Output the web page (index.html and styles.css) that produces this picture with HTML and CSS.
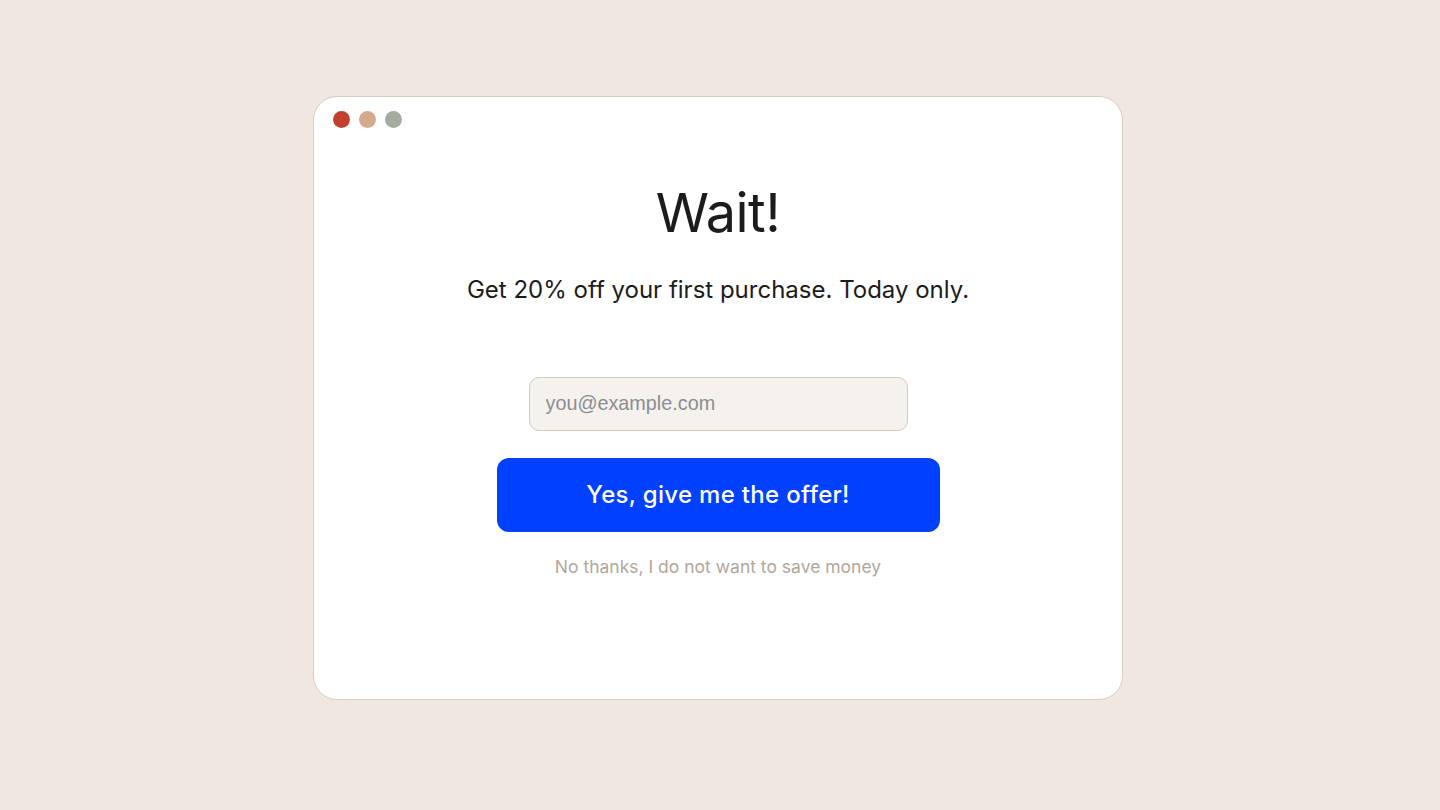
FILE: index.html
```html
<!DOCTYPE html>
<html>
<head>
    <title>Wait!</title>
    <link rel="stylesheet" href="styles.css">
</head>
<body>
    <div class="window">
        <div class="dots">
            <span class="dot red"></span>
            <span class="dot tan"></span>
            <span class="dot sage"></span>
        </div>
        <div class="offer">
            <h1>Wait!</h1>
            <p class="lead">Get 20% off your first purchase. Today only.</p>
            <input class="email" type="email" placeholder="you@example.com">
            <button class="cta">Yes, give me the offer!</button>
            <a class="decline" href="#">No thanks, I do not want to save money</a>
        </div>
    </div>
</body>
</html>
```

FILE: styles.css
```css
body {
    margin: 0;
    padding: 96px 0 0 313px;
    height: 810px;
    box-sizing: border-box;
    background-color: #f0e7e0;
    font-family: Inter, "Noto Sans", sans-serif;
}
.window {
    width: 810px;
    height: 604px;
    box-sizing: border-box;
    background-color: #ffffff;
    border: 1px solid #d9ccc0;
    border-radius: 24px;
    padding: 14px 19px;
}
.dots {
    display: flex;
    gap: 9px;
}
.dot {
    width: 17px;
    height: 17px;
    border-radius: 50%;
}
.red { background-color: #c2402f; }
.tan { background-color: #d4aa8b; }
.sage { background-color: #a4ac9f; }
.offer {
    display: flex;
    flex-direction: column;
    align-items: center;
}
h1 {
    margin: 53px 0 0;
    font-size: 54px;
    font-weight: 400;
    letter-spacing: -0.5px;
    color: #1c1c1c;
    line-height: 1.2;
}
.lead {
    margin: 29px 0 0;
    font-size: 24px;
    color: #1c1c1c;
}
.email {
    margin-top: 73px;
    width: 379px;
    height: 54px;
    box-sizing: border-box;
    padding: 0 16px;
    background-color: #f5f1ec;
    border: 1px solid #d6cabe;
    border-radius: 10px;
    font-family: "Liberation Sans", Arial, sans-serif;
    font-size: 19.8px;
    color: #333;
    outline: none;
}
.email::placeholder {
    color: #8b8d93;
}
.cta {
    margin-top: 27px;
    width: 443px;
    height: 74px;
    background-color: #0040ff;
    border: none;
    border-radius: 12px;
    color: #ffffff;
    font-family: inherit;
    font-size: 24px;
    font-weight: 500;
    letter-spacing: 0.3px;
    cursor: pointer;
}
.decline {
    margin-top: 24px;
    font-size: 17.5px;
    color: #b2a79d;
    text-decoration: none;
}
```
